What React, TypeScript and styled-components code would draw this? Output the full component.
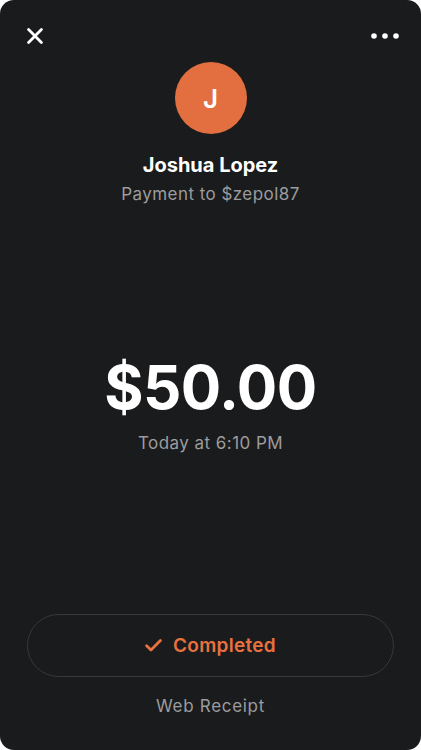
import React from "react";
import styled, { createGlobalStyle } from "styled-components";

const Global = createGlobalStyle`
  html, body { margin: 0; padding: 0; background: #ffffff; }
  body { font-family: Inter, "Noto Sans", sans-serif; -webkit-font-smoothing: antialiased; }
  * { box-sizing: border-box; }
`;

const Screen = styled.div`
  width: 421px;
  height: 750px;
  background: #1a1b1d;
  border-radius: 14px;
  overflow: hidden;
  display: flex;
  flex-direction: column;
  align-items: center;
  color: #ffffff;
`;

const Header = styled.div`
  width: 100%;
  height: 16px;
  margin-top: 28px;
  padding: 0 22px 0 27px;
  display: flex;
  align-items: center;
  justify-content: space-between;
`;

const IconButton = styled.button`
  border: 0;
  padding: 0;
  background: none;
  display: flex;
  align-items: center;
  cursor: pointer;
`;

const Avatar = styled.div`
  width: 72px;
  height: 72px;
  margin-top: 18px;
  border-radius: 50%;
  background: #e36f41;
  display: flex;
  align-items: center;
  justify-content: center;
  font-size: 26px;
  font-weight: 600;
  color: #ffffff;
`;

const Name = styled.div`
  margin-top: 19px;
  font-size: 20px;
  line-height: 24px;
  font-weight: 700;
  color: #ffffff;
`;

const Muted = styled.div<{ $top: number }>`
  margin-top: ${(p) => p.$top}px;
  font-size: 17px;
  line-height: 22px;
  font-weight: 400;
  letter-spacing: 0.45px;
  color: #9c9c9e;
`;

const Amount = styled.div`
  margin-top: 146px;
  font-size: 60px;
  line-height: 72px;
  font-weight: 700;
  letter-spacing: -0.5px;
  color: #ffffff;
`;

const Spacer = styled.div`
  flex: 1;
`;

const StatusPill = styled.div`
  width: 367px;
  height: 63px;
  border: 1px solid #38393b;
  border-radius: 32px;
  display: flex;
  align-items: center;
  justify-content: center;
  gap: 11px;
  color: #e8713f;
  font-size: 19px;
  font-weight: 600;
  letter-spacing: 0.3px;
`;

const Receipt = styled(Muted)`
  margin-bottom: 33px;
  letter-spacing: 0.7px;
`;

export default function App() {
  return (
    <>
      <Global />
      <Screen>
        <Header>
          <IconButton aria-label="Close">
            <svg width="16" height="16" viewBox="0 0 16 16">
              <path d="M1.6 1.6 L14.4 14.4 M14.4 1.6 L1.6 14.4" stroke="#fff" strokeWidth="2.8" strokeLinecap="round" />
            </svg>
          </IconButton>
          <IconButton aria-label="More">
            <svg width="28" height="6" viewBox="0 0 28 6">
              <circle cx="3" cy="3" r="2.8" fill="#fff" />
              <circle cx="14" cy="3" r="2.8" fill="#fff" />
              <circle cx="25" cy="3" r="2.8" fill="#fff" />
            </svg>
          </IconButton>
        </Header>
        <Avatar>J</Avatar>
        <Name>Joshua Lopez</Name>
        <Muted $top={6}>Payment to $zepol87</Muted>
        <Amount>$50.00</Amount>
        <Muted $top={9}>Today at 6:10 PM</Muted>
        <Spacer />
        <StatusPill>
          <svg width="17" height="13" viewBox="0 0 17 13">
            <path d="M1.6 6.8 L6 11 L15.4 1.6" fill="none" stroke="#e8713f" strokeWidth="2.8" strokeLinecap="round" strokeLinejoin="round" />
          </svg>
          Completed
        </StatusPill>
        <Receipt $top={18}>Web Receipt</Receipt>
      </Screen>
    </>
  );
}
